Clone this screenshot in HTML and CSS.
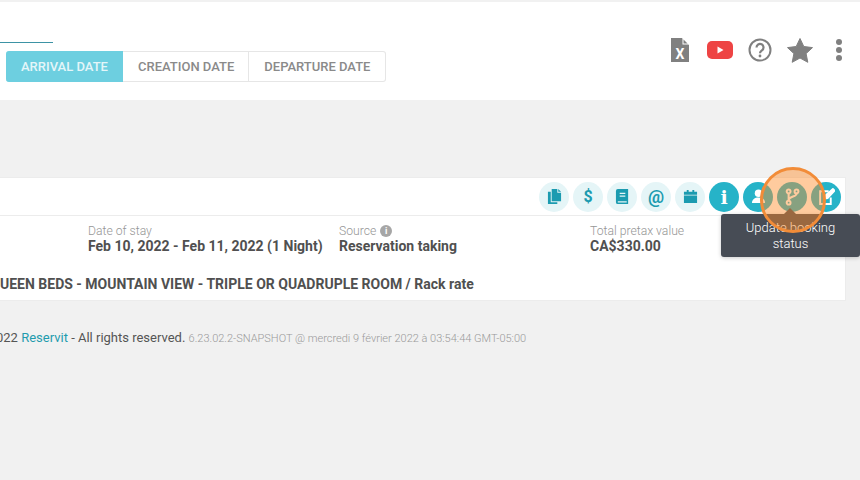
FILE: index.html
```html
<!DOCTYPE html>
<html lang="en">
<head>
  <meta charset="UTF-8">
  <title>Reservit - Bookings</title>
  <link rel="stylesheet" href="styles.css">
</head>
<body>
  <div class="page">
    <div class="top-bar">
      <div class="filters">
        <div class="search-line"></div>
        <div class="tabs">
          <div class="tab active">ARRIVAL DATE</div>
          <div class="tab">CREATION DATE</div>
          <div class="tab">DEPARTURE DATE</div>
        </div>
      </div>
      <div class="top-icons">
        <svg class="icon-file" viewBox="0 0 18 24"><path d="M0 0h11l7 7v17H0z" fill="#808080"/><path d="M11.500 0l6.500 6.500h-6.500z" fill="#fff"/><path d="M12.500 1.500l4 4h-4z" fill="#808080"/><text x="9" y="21" class="file-x">X</text></svg>
        <svg class="icon-yt" viewBox="0 0 26 18"><rect width="26" height="18" rx="5" fill="#ee4444"/><path d="M10.500 5.500l6 3.500-6 3.500z" fill="#fff"/></svg>
        <svg class="icon-help" viewBox="0 0 24 24"><circle cx="12" cy="12" r="10.500" fill="none" stroke="#808080" stroke-width="2"/><path d="M8.500 9.500a3.500 3.500 0 1 1 5.500 2.800c-1.300 1-2 1.500-2 3" fill="none" stroke="#808080" stroke-width="2.200"/><circle cx="12" cy="18" r="1.400" fill="#808080"/></svg>
        <svg class="icon-star" viewBox="0 0 26 25"><path d="M13 .5l3.800 8 8.700 1.100-6.400 6 1.700 8.700L13 20l-7.800 4.300 1.700-8.700-6.400-6 8.700-1.100z" fill="#808080" stroke="#808080" stroke-linejoin="round"/></svg>
        <div class="dots"><span></span><span></span><span></span></div>
      </div>
    </div>

    <div class="card">
      <div class="card-actions">
        <div class="action"><svg viewBox="0 0 16 16"><path d="M5 0h6v4h4v9H5z"/><path d="M12 0l3 3h-3z"/><path d="M1 3h3v11h7v2H1z"/></svg></div>
        <div class="action"><span class="glyph">$</span></div>
        <div class="action"><svg viewBox="0 0 16 16"><path fill-rule="evenodd" d="M3 0h11v16H3a2 2 0 0 1-2-2V2a2 2 0 0 1 2-2zm2 4v1.300h6V4zm0 3v1.300h6V7zM3 13v1.500h9.500V13z"/></svg></div>
        <div class="action"><span class="glyph at">@</span></div>
        <div class="action"><svg viewBox="0 0 16 16"><path d="M1 3h14v3H1zM1 7h14v8H1zM4 1h2v3H4zM10 1h2v3h-2z"/></svg></div>
        <div class="action on"><span class="glyph serif">i</span></div>
        <div class="action on"><svg viewBox="0 0 16 16"><circle cx="8" cy="4.500" r="4"/><path d="M1 15c0-4 3-6 7-6s7 2 7 6z"/></svg></div>
        <div class="action on"><svg viewBox="0 0 16 16" class="line-icon branch"><circle cx="5" cy="3" r="1.700"/><circle cx="12" cy="3" r="1.700"/><circle cx="5" cy="13" r="1.700"/><path d="M5 5v6M12 5c0 3-7 2-7 6"/></svg></div>
        <div class="action on"><svg viewBox="0 0 16 16" class="line-icon edit"><path d="M10 3H2v12h10V9"/><path d="M6 10l1-3 7-6 1.500 1.500-6.500 7z" fill="#fff"/></svg></div>
      </div>
      <div class="card-info">
        <div class="field stay">
          <div class="field-label">Date of stay</div>
          <div class="field-value">Feb 10, 2022 - Feb 11, 2022 (1 Night)</div>
        </div>
        <div class="field source">
          <div class="field-label">Source <span class="info-dot">i</span></div>
          <div class="field-value">Reservation taking</div>
        </div>
        <div class="field total">
          <div class="field-label">Total pretax value</div>
          <div class="field-value">CA$330.00</div>
        </div>
      </div>
      <div class="room">UEEN BEDS - MOUNTAIN VIEW - TRIPLE OR QUADRUPLE ROOM / Rack rate</div>
    </div>

    <div class="footer">
      <span class="rights">022 <a href="#">Reservit</a> - All rights reserved.</span>
      <span class="build">6.23.02.2-SNAPSHOT @ mercredi 9 février 2022 à 03:54:44 GMT-05:00</span>
    </div>

    <div class="tooltip">Update booking status</div>
    <div class="highlight"></div>
  </div>
</body>
</html>
```

FILE: styles.css
```css
* {
  margin: 0;
  padding: 0;
  box-sizing: border-box;
}

body {
  font-family: Roboto, sans-serif;
  background-color: #f1f1f1;
  overflow: hidden;
}

.page {
  position: relative;
  width: 860px;
  height: 480px;
  overflow: hidden;
  padding-top: 2px;
}

.top-bar {
  height: 98px;
  background-color: #ffffff;
  display: flex;
  justify-content: space-between;
}

.search-line {
  width: 53px;
  height: 1px;
  margin-top: 40px;
  background-color: #3d93a5;
}

.tabs {
  display: flex;
  margin-top: 8px;
  margin-left: 6px;
}

.tab {
  height: 31px;
  line-height: 29px;
  padding: 0 14px 0 15px;
  font-size: 13px;
  font-weight: 500;
  color: #8a8a8a;
  border: 1px solid #e6e6e6;
  border-left: none;
}

.tab:last-child {
  padding-right: 15px;
  border-left: none;
  border-radius: 0 3px 3px 0;
}

.tab.active {
  width: 117px;
  padding: 0 0 0 15px;
  background-color: #6dcfe0;
  border-color: #6dcfe0;
  border-radius: 3px 0 0 3px;
  color: #e4f6f9;
}

.top-icons {
  display: flex;
  align-items: center;
  margin-top: 35px;
  height: 26px;
  margin-right: 18px;
}

.icon-file {
  width: 18px;
  height: 24px;
  margin-right: 18px;
}

.file-x {
  font-family: Roboto, sans-serif;
  font-size: 14px;
  font-weight: 700;
  fill: #ffffff;
  text-anchor: middle;
}

.icon-yt {
  width: 26px;
  height: 18px;
  margin-right: 15px;
}

.icon-help {
  width: 24px;
  height: 24px;
  margin-right: 15px;
}

.icon-star {
  width: 26px;
  height: 25px;
  margin-right: 23px;
}

.dots {
  display: flex;
  flex-direction: column;
  gap: 2px;
}

.dots span {
  display: block;
  width: 6px;
  height: 6px;
  border-radius: 50%;
  background-color: #808080;
}

.card {
  margin-top: 77px;
  width: 846px;
  height: 124px;
  background-color: #ffffff;
  border: 1px solid #ececec;
  border-left: none;
}

.card-actions {
  height: 38px;
  display: flex;
  justify-content: flex-end;
  align-items: center;
  gap: 4px;
  padding-right: 4px;
  border-bottom: 1px solid #ececec;
}

.action {
  width: 30px;
  height: 30px;
  border-radius: 50%;
  background-color: #e5f5f7;
  color: #1b9bb0;
  fill: #1b9bb0;
  display: flex;
  align-items: center;
  justify-content: center;
}

.action.on {
  background-color: #26b3c8;
  color: #ffffff;
  fill: #ffffff;
}

.action svg {
  width: 15px;
  height: 15px;
}

.line-icon {
  fill: none;
  stroke: #ffffff;
  stroke-width: 1.800;
}

.action .line-icon.branch {
  width: 18px;
  height: 18px;
}

.action .line-icon.edit {
  width: 17px;
  height: 17px;
}

.glyph {
  font-size: 16px;
  font-weight: 700;
}

.glyph.at {
  font-size: 18px;
  font-weight: 700;
}

.glyph.serif {
  font-family: "DejaVu Serif", serif;
  font-size: 19px;
}

.card-info {
  display: flex;
  padding-left: 88px;
  padding-top: 8px;
  height: 50px;
}

.field.stay {
  width: 251px;
}

.field.source {
  width: 251px;
}

.field-label {
  font-size: 12.200px;
  line-height: 14px;
  font-weight: 300;
  color: #969696;
}

.field-value {
  font-size: 14px;
  line-height: 16px;
  font-weight: 700;
  color: #505050;
}

.info-dot {
  display: inline-block;
  width: 12px;
  height: 12px;
  border-radius: 50%;
  background-color: #a6a6a6;
  color: #ffffff;
  font-size: 9px;
  line-height: 12px;
  font-weight: 700;
  text-align: center;
  vertical-align: 1px;
  margin-left: 1px;
}

.room {
  margin-top: 10px;
  font-size: 14px;
  line-height: 16px;
  font-weight: 700;
  color: #505050;
  white-space: nowrap;
}

.footer {
  margin-top: 29px;
  margin-left: -4px;
  font-size: 13px;
  line-height: 16px;
  white-space: nowrap;
}

.rights {
  color: #555555;
}

.rights a {
  color: #1f9cae;
  text-decoration: none;
}

.build {
  font-size: 11px;
  font-weight: 300;
  color: #9a9a9a;
}

.tooltip {
  position: absolute;
  left: 721px;
  top: 214px;
  width: 139px;
  height: 43px;
  padding: 6px 10px;
  background-color: #474c55;
  border-radius: 3px;
  box-shadow: 0 1px 4px rgba(0, 0, 0, 0.2);
  color: #ffffff;
  font-size: 13px;
  font-weight: 300;
  line-height: 16px;
  text-align: center;
}

.tooltip::before {
  content: "";
  position: absolute;
  left: 63px;
  top: -6px;
  border-left: 6px solid transparent;
  border-right: 6px solid transparent;
  border-bottom: 6px solid #474c55;
}

.highlight {
  position: absolute;
  left: 760px;
  top: 167px;
  width: 66px;
  height: 66px;
  border: 3px solid #f28c38;
  border-radius: 50%;
  background-color: rgba(255, 140, 40, 0.45);
}
```
